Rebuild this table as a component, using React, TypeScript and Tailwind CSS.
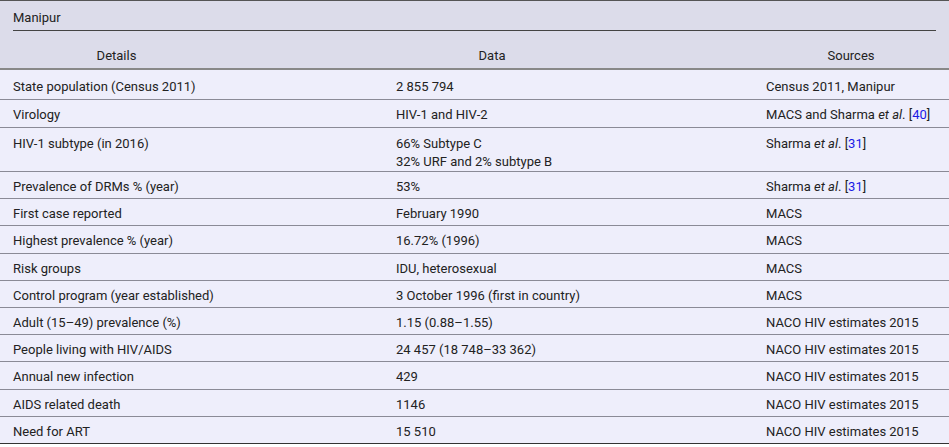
const link = "text-[#1a1ae6]";

const rows: { label: string; data: React.ReactNode; source: React.ReactNode; h: string; pt: string }[] = [
  { label: "State population (Census 2011)", data: "2 855 794", source: "Census 2011, Manipur", h: "h-[30px]", pt: "pt-[8px]" },
  {
    label: "Virology",
    data: "HIV-1 and HIV-2",
    source: (
      <>
        MACS and Sharma <i>et al</i>. [<span className={link}>40</span>]
      </>
    ),
    h: "h-[28px]",
    pt: "pt-[6px]",
  },
  {
    label: "HIV-1 subtype (in 2016)",
    data: (
      <>
        66% Subtype C
        <br />
        32% URF and 2% subtype B
      </>
    ),
    source: (
      <>
        Sharma <i>et al</i>. [<span className={link}>31</span>]
      </>
    ),
    h: "h-[44px]",
    pt: "pt-[7px]",
  },
  {
    label: "Prevalence of DRMs % (year)",
    data: "53%",
    source: (
      <>
        Sharma <i>et al</i>. [<span className={link}>31</span>]
      </>
    ),
    h: "h-[27px]",
    pt: "pt-[6px]",
  },
  { label: "First case reported", data: "February 1990", source: "MACS", h: "h-[27px]", pt: "pt-[6px]" },
  { label: "Highest prevalence % (year)", data: "16.72% (1996)", source: "MACS", h: "h-[28px]", pt: "pt-[6px]" },
  { label: "Risk groups", data: "IDU, heterosexual", source: "MACS", h: "h-[27px]", pt: "pt-[6px]" },
  { label: "Control program (year established)", data: "3 October 1996 (first in country)", source: "MACS", h: "h-[27px]", pt: "pt-[6px]" },
  { label: "Adult (15–49) prevalence (%)", data: "1.15 (0.88–1.55)", source: "NACO HIV estimates 2015", h: "h-[27px]", pt: "pt-[6px]" },
  { label: "People living with HIV/AIDS", data: "24 457 (18 748–33 362)", source: "NACO HIV estimates 2015", h: "h-[27px]", pt: "pt-[6px]" },
  { label: "Annual new infection", data: "429", source: "NACO HIV estimates 2015", h: "h-[28px]", pt: "pt-[6px]" },
  { label: "AIDS related death", data: "1146", source: "NACO HIV estimates 2015", h: "h-[27px]", pt: "pt-[6px]" },
  { label: "Need for ART", data: "15 510", source: "NACO HIV estimates 2015", h: "h-[27px]", pt: "pt-[6px]" },
];

export default function App() {
  return (
    <div className="w-[949px] bg-[#eeeefb] text-[13px] leading-[18px] text-[#222] font-['Roboto',sans-serif]">
      <div className="border-t border-[#555] bg-[#dcdcea]">
        <div className="px-[13px]">
          <div className="h-[30px] border-b border-[#444] pt-[8px]">Manipur</div>
        </div>
        <div className="grid h-[39px] grid-cols-[383px_370px_1fr] border-b-2 border-[#888] pt-[16px]">
          <div className="pr-[150px] text-center">Details</div>
          <div className="pr-[152px] text-center">Data</div>
          <div className="text-center">Sources</div>
        </div>
      </div>
      {rows.map((r, i) => (
        <div
          key={i}
          className={`grid grid-cols-[383px_370px_1fr] border-b ${i === rows.length - 1 ? "border-[#333]" : "border-[#8a8a96]"} ${r.h} ${r.pt}`}
        >
          <div className="pl-[13px]">{r.label}</div>
          <div className="pl-[13px]">{r.data}</div>
          <div className="pl-[13px]">{r.source}</div>
        </div>
      ))}
    </div>
  );
}
